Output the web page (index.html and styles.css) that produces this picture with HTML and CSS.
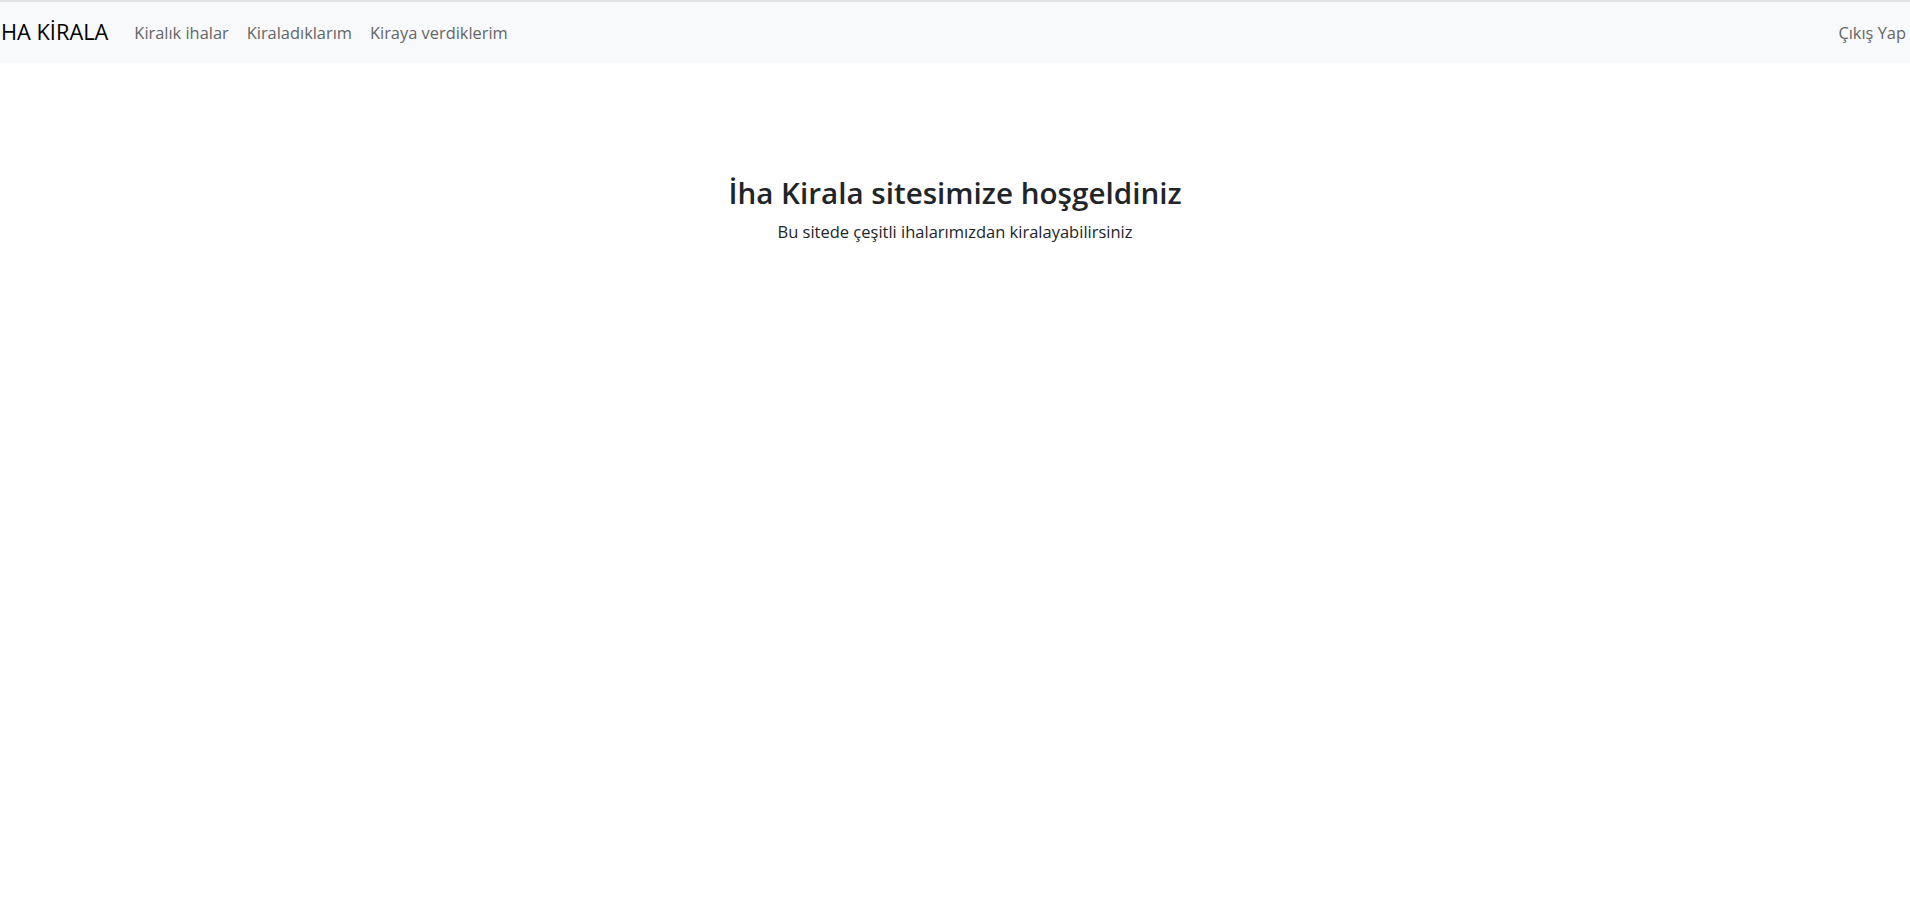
FILE: index.html
```html
<!DOCTYPE html>
<html lang="tr">
<head>
<meta charset="utf-8">
<title>İHA Kirala</title>
<link rel="stylesheet" href="styles.css">
</head>
<body>
<nav class="navbar">
  <a class="brand" href="#">HA KİRALA</a>
  <ul class="nav">
    <li><a class="nav-link" href="#">Kiralık ihalar</a></li>
    <li><a class="nav-link" href="#">Kiraladıklarım</a></li>
    <li><a class="nav-link" href="#">Kiraya verdiklerim</a></li>
  </ul>
  <a class="nav-link logout" href="#">Çıkış Yap</a>
</nav>
<main class="hero">
  <h1 class="title">İha Kirala sitesimize hoşgeldiniz</h1>
  <p class="lead">Bu sitede çeşitli ihalarımızdan kiralayabilirsiniz</p>
</main>
</body>
</html>
```
FILE: styles.css
```css
html, body {
  margin: 0;
  padding: 0;
  background: #fff;
  font-family: "Open Sans", "Noto Sans", sans-serif;
  color: #212529;
}
.navbar {
  display: flex;
  align-items: center;
  height: 61px;
  background: #f8f9fa;
  border-top: 2px solid #dfe3e6;
  padding: 0 4px 0 1px;
}
.brand {
  font-size: 21.8px;
  color: #000;
  text-decoration: none;
  margin-right: 17px;
  padding-bottom: 2px;
}
.nav {
  display: flex;
  list-style: none;
  margin: 0;
  padding: 0;
  flex: 1;
}
.nav-link {
  display: block;
  padding: 8px 9px;
  font-size: 16.4px;
  color: #656667;
  text-decoration: none;
}
.logout {
  padding-right: 0;
}
.hero {
  text-align: center;
  padding-top: 112px;
}
.title {
  margin: 0;
  font-size: 29.6px;
  font-weight: 600;
  line-height: 1.2;
}
.lead {
  margin: 9px 0 0;
  font-size: 16.5px;
}
```
